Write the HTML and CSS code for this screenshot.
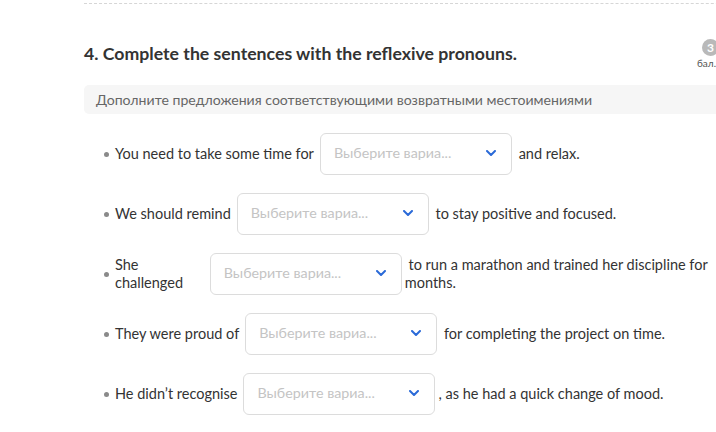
FILE: index.html
```html
<!DOCTYPE html>
<html lang="ru">
<head>
<meta charset="utf-8">
<link rel="stylesheet" href="styles.css">
</head>
<body>
<div class="page">
  <div class="divider"></div>
  <div class="task-head">
    <h2 class="title">4. Complete the sentences with the reflexive pronouns.</h2>
    <div class="score"><span class="score-num">3</span><span class="score-label">бал.</span></div>
  </div>
  <div class="hint">Дополните предложения соответствующими возвратными местоимениями</div>
  <ul class="items">
    <li class="item">
      <span class="txt">You need to take some time for</span>
      <div class="select"><span class="ph">Выберите вариа...</span><svg class="chev" width="10" height="6" viewBox="0 0 10 6"><path d="M1 1l4 4 4-4" fill="none" stroke="#2b6ad8" stroke-width="2" stroke-linecap="round" stroke-linejoin="round"/></svg></div>
      <span class="txt"> and relax.</span>
    </li>
    <li class="item">
      <span class="txt">We should remind</span>
      <div class="select"><span class="ph">Выберите вариа...</span><svg class="chev" width="10" height="6" viewBox="0 0 10 6"><path d="M1 1l4 4 4-4" fill="none" stroke="#2b6ad8" stroke-width="2" stroke-linecap="round" stroke-linejoin="round"/></svg></div>
      <span class="txt"> to stay positive and focused.</span>
    </li>
    <li class="item">
      <span class="txt">She challenged</span>
      <div class="select"><span class="ph">Выберите вариа...</span><svg class="chev" width="10" height="6" viewBox="0 0 10 6"><path d="M1 1l4 4 4-4" fill="none" stroke="#2b6ad8" stroke-width="2" stroke-linecap="round" stroke-linejoin="round"/></svg></div>
      <span class="txt"> to run a marathon and trained her discipline for months.</span>
    </li>
    <li class="item">
      <span class="txt">They were proud of</span>
      <div class="select"><span class="ph">Выберите вариа...</span><svg class="chev" width="10" height="6" viewBox="0 0 10 6"><path d="M1 1l4 4 4-4" fill="none" stroke="#2b6ad8" stroke-width="2" stroke-linecap="round" stroke-linejoin="round"/></svg></div>
      <span class="txt"> for completing the project on time.</span>
    </li>
    <li class="item">
      <span class="txt">He didn’t recognise</span>
      <div class="select"><span class="ph">Выберите вариа...</span><svg class="chev" width="10" height="6" viewBox="0 0 10 6"><path d="M1 1l4 4 4-4" fill="none" stroke="#2b6ad8" stroke-width="2" stroke-linecap="round" stroke-linejoin="round"/></svg></div>
      <span class="txt">, as he had a quick change of mood.</span>
    </li>
  </ul>
</div>
</body>
</html>
```
FILE: styles.css
```css
html, body {
  margin: 0;
  padding: 0;
  background: #fff;
  overflow: hidden;
}
body {
  font-family: Lato, "Open Sans", "Noto Sans", sans-serif;
  color: #333;
}
.page {
  width: 700px;
  margin-left: 84px;
}
.divider {
  margin-top: 3px;
  border-top: 1px dashed #d6d6d6;
}
.task-head {
  display: flex;
  justify-content: space-between;
  align-items: flex-start;
  width: 635px;
  margin-top: 35px;
}
.title {
  margin: 3px 0 0;
  font-size: 17.7px;
  font-weight: 700;
  color: #333;
  line-height: 24px;
}
.score {
  flex: 0 0 22px;
  display: flex;
  flex-direction: column;
  align-items: flex-start;
}
.score-num {
  width: 17px;
  height: 17px;
  margin-left: 5px;
  border-radius: 50%;
  background: #b9b9b9;
  color: #fff;
  font-size: 12px;
  font-weight: 700;
  line-height: 17px;
  text-align: center;
}
.score-label {
  margin-top: 1px;
  font-size: 10px;
  color: #555;
  line-height: 12px;
}
.hint {
  margin-top: 16px;
  height: 29px;
  line-height: 29px;
  padding-left: 12px;
  background: #f6f6f6;
  border-radius: 5px;
  font-size: 14.1px;
  color: #666;
  width: 700px;
}
.items {
  list-style: none;
  margin: 19px 0 0;
  padding: 0 0 0 20px;
  width: 634px;
}
.item {
  display: flex;
  align-items: center;
  min-height: 42px;
  margin-bottom: 18px;
  font-size: 14.5px;
  line-height: 18px;
  position: relative;
  padding-left: 11px;
}
.item::before {
  content: "";
  position: absolute;
  left: 0;
  top: 50%;
  width: 5px;
  height: 5px;
  margin-top: -2px;
  border-radius: 50%;
  background: #8a8a8a;
}
.txt {
  white-space: pre-wrap;
}
.select {
  flex: 0 0 192px;
  height: 42px;
  box-sizing: border-box;
  border: 1px solid #dcdcdc;
  border-radius: 6px;
  margin: 0 3px 0 6px;
  display: flex;
  align-items: center;
  justify-content: space-between;
  padding: 0 15px 2px 13px;
  background: #fff;
}
.ph {
  color: #c4c4c4;
  font-size: 14.3px;
}
.chev {
  display: block;
}
```
